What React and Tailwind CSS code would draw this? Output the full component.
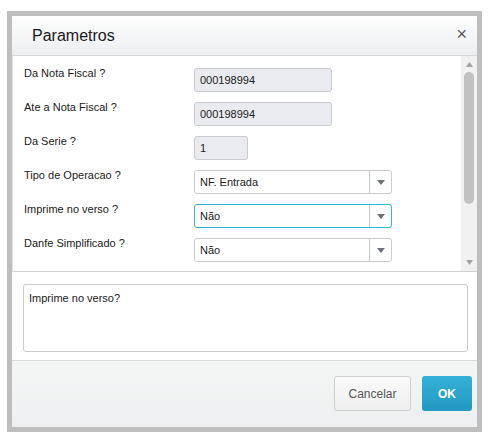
import React from "react";

const fields = [
  { label: "Da Nota Fiscal ?", type: "input", value: "000198994", width: "w-[138px]" },
  { label: "Ate a Nota Fiscal ?", type: "input", value: "000198994", width: "w-[138px]" },
  { label: "Da Serie ?", type: "input", value: "1", width: "w-[54px]" },
  { label: "Tipo de Operacao ?", type: "select", value: "NF. Entrada" },
  { label: "Imprime no verso ?", type: "select", value: "Não", focused: true },
  { label: "Danfe Simplificado ?", type: "select", value: "Não" },
];

function Field({ field }) {
  if (field.type === "input") {
    return (
      <div
        className={`${field.width} h-[24px] mt-[2px] rounded-[3px] border border-[#c9cbce] bg-[#e9ebf0] pl-[5px] flex items-center text-[11px] text-[#222]`}
      >
        {field.value}
      </div>
    );
  }
  return (
    <div
      className={`w-[198px] h-[24px] mt-[2px] rounded-[3px] border bg-white flex items-stretch text-[11px] text-[#222] ${
        field.focused ? "border-[#3cb1d9]" : "border-[#c9cbce]"
      }`}
    >
      <div className="flex-1 pl-[5px] flex items-center">{field.value}</div>
      <div className="w-[22px] border-l border-[#c9cbce] flex items-center justify-center">
        <svg width="8" height="5" viewBox="0 0 8 5">
          <path d="M0 0 L8 0 L4 5 Z" fill="#6c7077" />
        </svg>
      </div>
    </div>
  );
}

export default function App() {
  return (
    <div
      className="w-[490px] h-[438px] bg-white pt-[11px] pl-[7px]"
      style={{ fontFamily: '"Liberation Sans", Arial, sans-serif' }}
    >
      <div className="w-[475px] h-[421px] border-[5px] border-[#bebebe] bg-white flex flex-col">
        {/* Header */}
        <div className="h-[40px] shrink-0 bg-gradient-to-b from-white to-[#eceef0] border-b border-[#d6d8da] flex items-center justify-between pl-[20px] pr-[10px]">
          <span className="text-[16px] text-[#1a1a1a] mt-[1px]">Parametros</span>
          <span className="text-[18px] leading-none text-[#555] -mt-[4px]">×</span>
        </div>

        {/* Parameters panel */}
        <div className="h-[216px] shrink-0 flex border-b border-[#cfd1d3] border-l border-l-[#e3e3e3]">
          <div className="flex-1 overflow-hidden pt-[10px] pl-[11px]">
            {fields.map((f) => (
              <div key={f.label} className="h-[34px] flex items-start">
                <div className="w-[170px] text-[11px] leading-[14px] text-[#222]">{f.label}</div>
                <Field field={f} />
              </div>
            ))}
          </div>
          {/* Scrollbar */}
          <div className="w-[16px] bg-[#f1f1f1] flex flex-col items-center">
            <svg className="mt-[6px]" width="7" height="5" viewBox="0 0 7 5">
              <path d="M3.5 0 L7 5 L0 5 Z" fill="#a3a3a3" />
            </svg>
            <div className="mt-[5px] w-[10px] h-[132px] rounded-[5px] bg-[#c1c1c1]" />
            <div className="flex-1" />
            <svg className="mb-[6px]" width="7" height="5" viewBox="0 0 7 5">
              <path d="M0 0 L7 0 L3.5 5 Z" fill="#a3a3a3" />
            </svg>
          </div>
        </div>

        {/* Help text */}
        <div className="h-[88px] shrink-0 pt-[12px] pl-[11px] pr-[9px] bg-white">
          <div className="h-[68px] rounded-[3px] border border-[#cccccc] pl-[5px] pt-[5px] text-[11px] text-[#222]">
            Imprime no verso?
          </div>
        </div>

        {/* Footer */}
        <div className="flex-1 bg-gradient-to-b from-[#f4f5f5] to-[#eeeff0] border-t border-[#d6d8da] flex justify-end items-start pt-[15px] pr-[5px] gap-[11px]">
          <button className="w-[77px] h-[35px] rounded-[3px] border border-[#cfcfcf] bg-gradient-to-b from-[#fafafa] to-[#efefef] text-[12px] text-[#555]">
            Cancelar
          </button>
          <button className="w-[50px] h-[35px] rounded-[3px] bg-gradient-to-b from-[#35b0d6] to-[#2299c2] text-[12px] font-bold text-white">
            OK
          </button>
        </div>
      </div>
    </div>
  );
}
